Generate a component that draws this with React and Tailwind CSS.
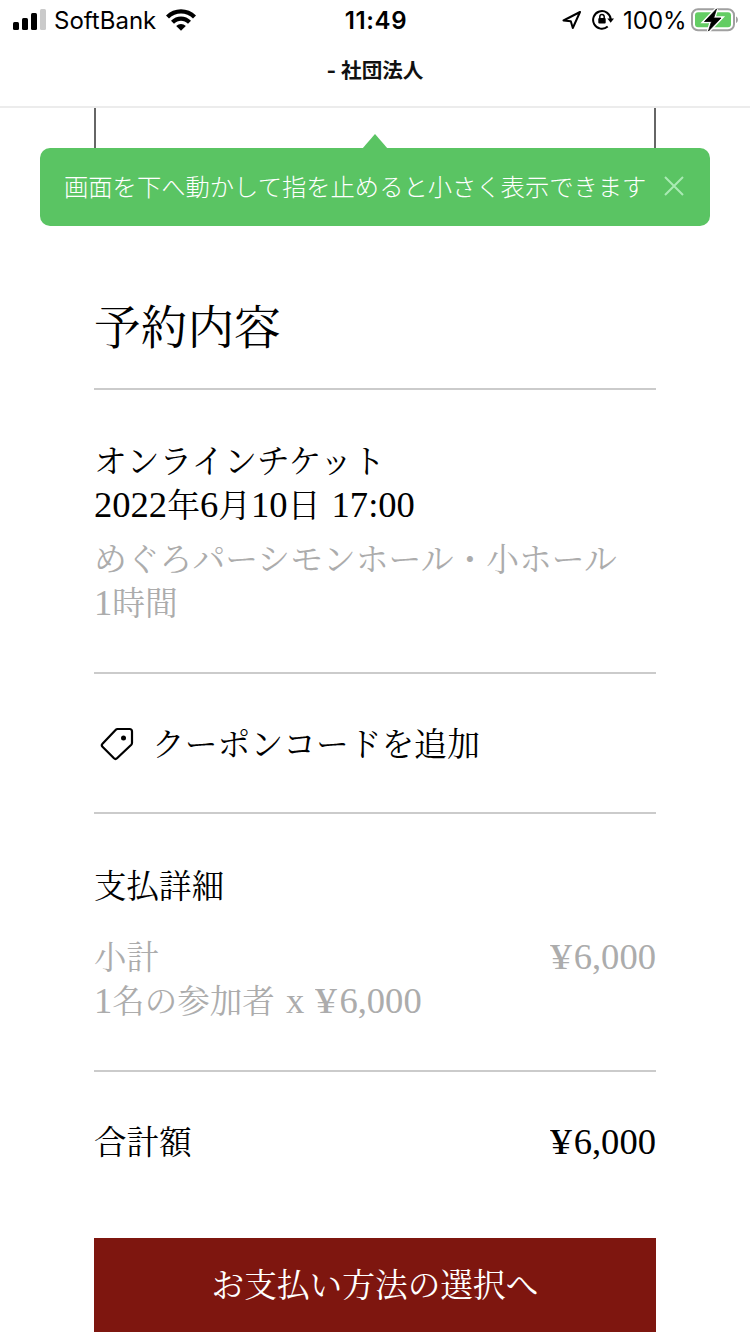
const SERIF = "font-['Liberation_Serif','Noto_Serif_CJK_JP','Noto_Sans_CJK_JP',serif]";

/** Latin digits run a bit larger than the kana/kanji around them. */
function Num({ children }) {
  return <span className="text-[36.6px] leading-none [word-spacing:2px]">{children}</span>;
}

function Yen({ amount }) {
  return (
    <span className="text-[36.6px] leading-none">
      <span className="inline-block w-[24px] origin-left scale-x-[1.2]">¥</span>
      {amount}
    </span>
  );
}

function StatusBar() {
  return (
    <div className="flex h-10 items-center justify-between pl-[13px] pr-[11px] font-['Inter','Liberation_Sans',sans-serif] text-black">
      <div className="flex w-[300px] items-center">
        <svg width="33" height="22" viewBox="0 0 33 22">
          <rect x="0" y="13" width="6" height="8" rx="1.5" />
          <rect x="9" y="9" width="6" height="12" rx="1.5" />
          <rect x="18" y="4" width="6" height="17" rx="1.5" />
          <rect x="27" y="0" width="6" height="21" rx="1.5" fill="#cacaca" />
        </svg>
        <span className="ml-[8px] w-[103px] whitespace-nowrap pt-px text-[24px] leading-10">SoftBank</span>
        <svg className="ml-[9px]" width="30" height="22" viewBox="0 0 30 22">
          <path d="M0 6.5C8-2 22-2 30 6.5L27 9.5C20.500 2.800 9.500 2.800 3 9.500Z" />
          <path d="M5 11.700C10.500 6 19.500 6 25 11.700L22 14.700C18 10.700 12 10.700 8 14.700Z" />
          <path d="M10.200 17C13 14.300 17 14.300 19.800 17L15 21.800Z" />
        </svg>
      </div>
      <span className="pt-px text-[24px] font-semibold leading-10 tracking-[0.6px]">11:49</span>
      <div className="flex w-[300px] items-center justify-end">
        <svg width="20" height="20" viewBox="0 0 20 20" fill="none" stroke="black" strokeWidth="2" strokeLinejoin="round">
          <path d="M18 2L1.500 10.500L8.800 11.300L10.800 18Z" />
        </svg>
        <svg className="ml-[10px]" width="22" height="22" viewBox="0 0 22 22" fill="none" stroke="black" strokeWidth="2">
          <path d="M15.700 17.600A8.800 8.800 0 1 1 18.700 10.200" />
          <path d="M15.300 9.500h6.700l-3.300 4.200z" fill="black" stroke="none" />
          <rect x="6.300" y="9" width="7.400" height="5.600" rx="1" fill="black" stroke="none" />
          <path d="M7.800 9.500V7.700a2.200 2.200 0 0 1 4.400 0V9.500" strokeWidth="1.500" />
        </svg>
        <span className="ml-[9px] w-[63px] whitespace-nowrap pt-px text-[24px] leading-10">100%</span>
        <svg className="ml-[5px]" width="48" height="24" viewBox="0 0 48 24">
          <rect x="1" y="1.200" width="42" height="21" rx="6" fill="none" stroke="#a0a0a0" strokeWidth="2" />
          <rect x="4" y="4.200" width="36" height="15" rx="3" fill="#64cd64" />
          <path d="M45 8.500c2.500 1 2.500 5.500 0 6.500z" fill="#a0a0a0" />
          <path d="M25.500 1L13.500 13.500H20.500L17.500 23L30 10H22.700Z" stroke="white" strokeWidth="3.500" />
          <path d="M25.500 1L13.500 13.500H20.500L17.500 23L30 10H22.700Z" stroke="black" strokeWidth="0.800" />
        </svg>
      </div>
    </div>
  );
}

function Hint() {
  return (
    <div className="relative mx-10 flex h-[78px] items-center rounded-[10px] bg-[#5ac463] pl-6 text-white">
      <svg className="absolute left-[322px] top-[-14px]" width="26" height="15" viewBox="0 0 26 15">
        <path d="M0 15L13 0L26 15Z" fill="#5ac463" />
      </svg>
      <span className="w-[584px] whitespace-nowrap pb-[2px] font-['Noto_Sans_CJK_JP',sans-serif] text-[24.3px] font-light">
        画面を下へ動かして指を止めると小さく表示できます
      </span>
      <svg className="mb-[2px] ml-4" width="20" height="20" viewBox="0 0 20 20" stroke="#a9eab4" strokeWidth="2">
        <path d="M1 1L19 19M19 1L1 19" />
      </svg>
    </div>
  );
}

function Rule() {
  return <div className="h-[2px] bg-[#cbcbcb]" />;
}

export default function App() {
  return (
    <div className="h-[1334px] w-[750px] overflow-hidden bg-white">
      <StatusBar />
      <div className="flex h-[68px] items-center justify-center border-b-2 border-[#ececec] pb-[4px] font-['Inter','Noto_Sans_CJK_JP',sans-serif] text-[20.6px] font-bold text-[#111]">
        - 社団法人
      </div>

      {/* bottom edge of the form scrolled under the header */}
      <div className="mx-[94px] h-10 border-x-2 border-[#666]" />
      <Hint />

      <main className={`mx-[94px] whitespace-nowrap text-[32.8px] text-black ${SERIF}`}>
        <h1 className="mt-[67px] h-[70px] text-[46.7px] leading-[70px]">予約内容</h1>
        <div className="mt-[25px]">
          <Rule />
        </div>

        <section className="h-[282px] pt-[50px]">
          <p className="h-11 leading-[44px]">オンラインチケット</p>
          <p className="h-11 leading-[44px]">
            <Num>2022</Num>年<Num>6</Num>月<Num>10</Num>日<Num> 17:00</Num>
          </p>
          <div className="mt-[10px] text-[#acacac]">
            <p className="h-11 leading-[44px]">めぐろパーシモンホール・小ホール</p>
            <p className="h-11 leading-[44px]">
              <Num>1</Num>時間
            </p>
          </div>
        </section>
        <Rule />

        <button type="button" className="flex h-[138px] w-full items-center pl-[6px]">
          <svg className="mt-px" width="34" height="34" viewBox="0 0 34 34" fill="none" stroke="black" strokeWidth="2.200" strokeLinejoin="round">
            <path d="M17.500 2H29.500Q32 2 32 4.500V16Q32 17 31.300 17.700L17 31.300Q15.500 32.700 14 31.300L2.500 19.800Q1 18.300 2.500 16.800L15.800 2.800Q16.500 2 17.500 2Z" />
            <circle cx="23.500" cy="11" r="2.500" fill="black" stroke="none" />
          </svg>
          <span className="ml-[18px] pt-[5px]">クーポンコードを追加</span>
        </button>
        <Rule />

        <section className="h-[256px] pt-[51px]">
          <h2 className="h-11 text-[32.5px] leading-[44px]">支払詳細</h2>
          <div className="mt-[27px] text-[32.5px] text-[#acacac]">
            <div className="flex h-11 justify-between leading-[44px]">
              <span>小計</span>
              <span>
                <Yen amount="6,000" />
              </span>
            </div>
            <p className="h-11 leading-[44px]">
              <Num>1</Num>名の参加者<Num> x </Num>
              <Yen amount="6,000" />
            </p>
          </div>
        </section>
        <Rule />

        <div className="flex h-[166px] justify-between pt-[49px] text-[32.5px] leading-[44px]">
          <span>合計額</span>
          <span>
            <Yen amount="6,000" />
          </span>
        </div>
        <button type="button" className="h-[94px] w-full bg-[#7e160f] pt-[4px] text-[32.7px] text-white">
          お支払い方法の選択へ
        </button>
      </main>
    </div>
  );
}
